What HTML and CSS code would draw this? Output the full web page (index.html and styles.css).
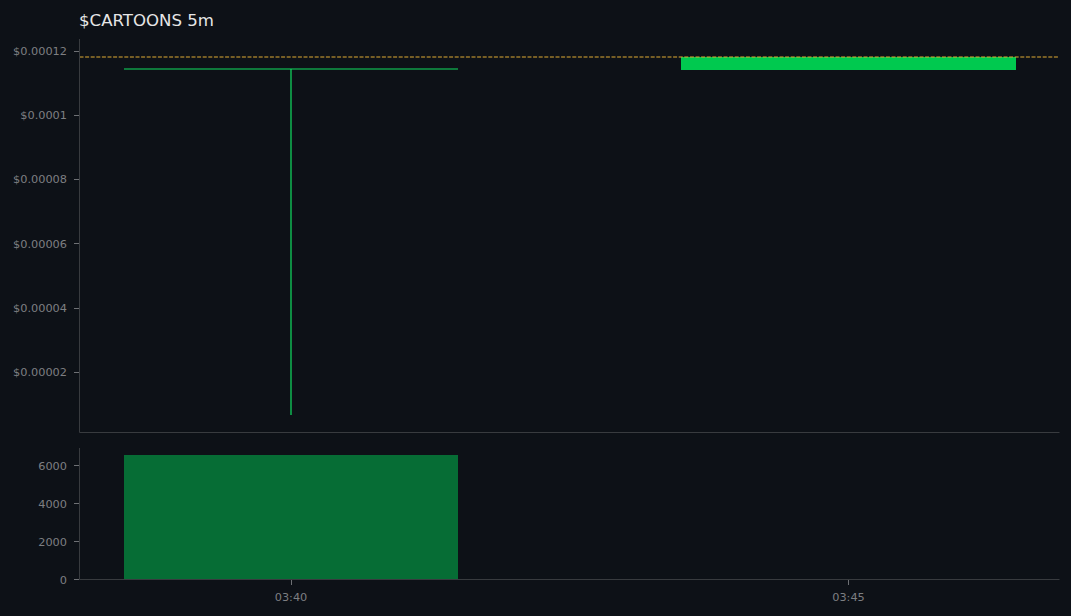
FILE: index.html
```html
<!DOCTYPE html>
<html lang="en">
<head>
<meta charset="utf-8">
<title>$CARTOONS 5m</title>
<link rel="stylesheet" href="styles.css">
</head>
<body>
<svg class="chart" viewBox="0 0 1071 616" width="1071" height="616" xmlns="http://www.w3.org/2000/svg">
  <text class="title" x="79" y="26">$CARTOONS 5m</text>

  <g class="ticks">
    <path d="M74 51.500H79M74 115.500H79M74 179.500H79M74 243.500H79M74 308.500H79M74 372.500H79"/>
    <path d="M74 465.500H79M74 503.500H79M74 541.500H79M74 579.500H79"/>
    <path d="M291.500 580V585M848.500 580V585"/>
  </g>

  <g class="labels-y">
    <text x="67" y="55">$0.00012</text>
    <text x="67" y="119">$0.0001</text>
    <text x="67" y="183">$0.00008</text>
    <text x="67" y="247.500">$0.00006</text>
    <text x="67" y="312">$0.00004</text>
    <text x="67" y="376">$0.00002</text>
    <text x="67" y="469.500">6000</text>
    <text x="67" y="507.500">4000</text>
    <text x="67" y="545.500">2000</text>
    <text x="67" y="583.500">0</text>
  </g>
  <g class="labels-x">
    <text x="291" y="601">03:40</text>
    <text x="848.500" y="601">03:45</text>
  </g>

  <rect class="volume" x="124" y="455" width="334" height="124"/>
  <rect class="candle" x="681" y="57" width="335" height="13"/>
  <path class="wick" d="M124 69H458M291 69V415"/>
  <path class="last-price" d="M79.500 57H1059"/>

  <g class="axes">
    <path d="M79.500 39V432.500H1059.500"/>
    <path d="M79.500 448V579.500H1059.500"/>
  </g>
</svg>
</body>
</html>
```
FILE: styles.css
```css
html, body {
  margin: 0;
  padding: 0;
  background: #0d1117;
  overflow: hidden;
}
.chart {
  display: block;
  font-family: "DejaVu Sans", sans-serif;
}
.title {
  font-size: 16.600px;
  fill: #e6e6e6;
}
.labels-y text,
.labels-x text {
  font-size: 11.300px;
  fill: #7d7f82;
}
.labels-y text { text-anchor: end; }
.labels-x text { text-anchor: middle; }
.ticks path {
  stroke: #6e7074;
  stroke-width: 1;
  fill: none;
}
.axes path {
  stroke: #383b3f;
  stroke-width: 1;
  fill: none;
}
.volume { fill: #066d35; }
.candle { fill: #00c94f; }
.wick {
  stroke: #10e060;
  stroke-width: 1.200;
  fill: none;
}
.last-price {
  stroke: #e0ac35;
  stroke-width: 1.150;
  stroke-dasharray: 4 1.600;
  fill: none;
}
```
